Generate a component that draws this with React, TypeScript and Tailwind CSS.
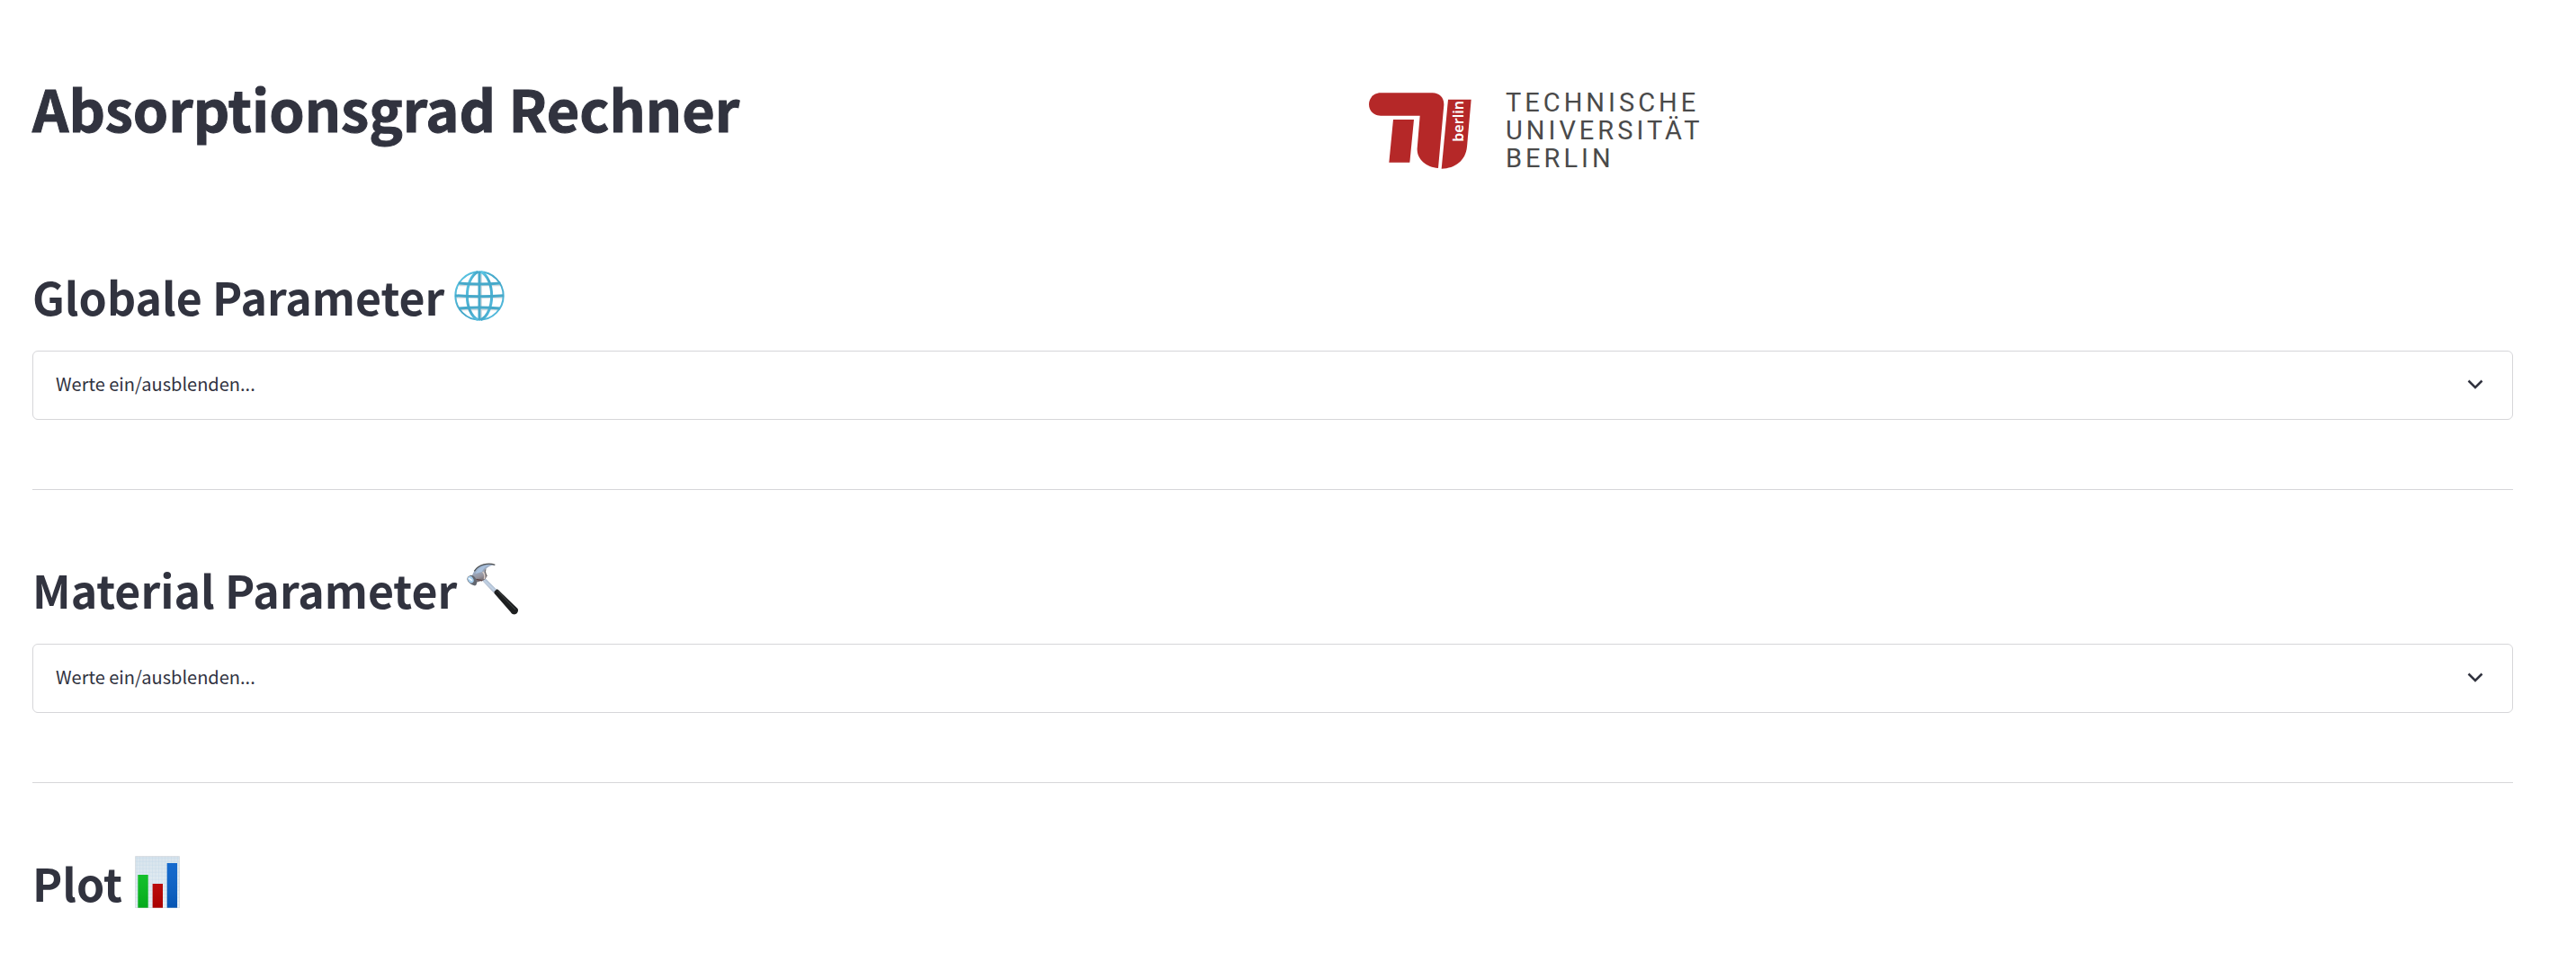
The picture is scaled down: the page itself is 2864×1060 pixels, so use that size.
import { useState, type ReactNode } from "react";

function GlobeIcon() {
  return (
    <svg viewBox="37 30 174 174" className="size-[58px] shrink-0" aria-hidden="true">
      <defs>
        <linearGradient id="globeStroke" x1="0" y1="0" x2="1" y2="1">
          <stop offset="0" stopColor="#5fcbe9" />
          <stop offset="0.5" stopColor="#43a6c8" />
          <stop offset="1" stopColor="#56bfe2" />
        </linearGradient>
      </defs>
      <g fill="none" stroke="#bcc9d0" strokeWidth="5" opacity="0.7">
        <path d="M56 82H194M47 123H203M58 163H190" />
        <path d="M130 40V194" />
      </g>
      <g fill="none" stroke="url(#globeStroke)">
        <circle cx="124" cy="117" r="80" strokeWidth="6" />
        <path d="M119 37C71 60 71 174 119 197" strokeWidth="9" />
        <path d="M129 37C177 60 177 174 129 197" strokeWidth="9" />
      </g>
      <g fill="none" stroke="#46a9ca" strokeWidth="9">
        <path d="M54 75Q124 81 194 75" />
        <path d="M43 116Q124 122 205 116" />
        <path d="M56 159Q124 153 192 159" />
        <path d="M124 36V198" />
      </g>
    </svg>
  );
}

function HammerIcon() {
  return (
    <svg viewBox="42 46 174 174" className="size-[58px] shrink-0" aria-hidden="true">
      <defs>
        <linearGradient id="hammerHead" x1="0" y1="0" x2="0.5" y2="1">
          <stop offset="0" stopColor="#59616b" />
          <stop offset="0.3" stopColor="#a0b6d2" />
          <stop offset="0.7" stopColor="#95929b" />
          <stop offset="1" stopColor="#5c5052" />
        </linearGradient>
        <linearGradient id="hammerNeck" x1="0" y1="1" x2="1" y2="0">
          <stop offset="0" stopColor="#5e4f4d" />
          <stop offset="0.5" stopColor="#c3d3e6" />
          <stop offset="1" stopColor="#4d5d70" />
        </linearGradient>
      </defs>
      <path d="M94 103L106 97L146 137L134 146Z" fill="url(#hammerNeck)" />
      <path d="M137 141L146 134C151 137 154 140 158 144L214 198C220 206 212 220 201 218C196 217 194 214 191 210L136 147Z" fill="#1d1f20" />
      <path d="M149 141L206 201" stroke="#45494a" strokeWidth="3" strokeLinecap="round" />
      <path d="M62 90C66 78 72 68 82 60C98 49 120 46 139 53C126 54 115 59 108 68C104 74 107 82 112 90C109 100 100 107 91 107L76 112C68 107 62 99 62 90Z" fill="url(#hammerHead)" />
      <path d="M73 83C80 65 99 55 122 53C107 58 100 66 96 76Z" fill="#a9c0dc" />
      <path d="M70 74C84 50 118 45 139 53" fill="none" stroke="#4e5153" strokeWidth="4" />
      <path d="M98 76C104 82 106 90 103 100" fill="none" stroke="#ddd0ca" strokeWidth="4" />
      <path d="M108 68C104 76 109 84 112 91" fill="none" stroke="#5e5754" strokeWidth="3" />
      <path d="M76 101C84 103 91 104 96 106" fill="none" stroke="#5a3f40" strokeWidth="4" />
      <path d="M57 88C65 85 76 95 78 109C79 118 76 123 70 122C59 119 47 110 46 101C46 94 50 90 57 88Z" fill="#626770" />
      <ellipse cx="58" cy="102" rx="9" ry="12" transform="rotate(-30 58 102)" fill="#a9cfee" />
      <path d="M53 98L61 104" stroke="#f4fbff" strokeWidth="5" strokeLinecap="round" />
    </svg>
  );
}

function ChartIcon() {
  const lines = Array.from({ length: 14 }, (_, i) => i);
  return (
    <svg viewBox="441 66 174 174" className="size-[58px] shrink-0" aria-hidden="true">
      <defs>
        <linearGradient id="chartPaper" x1="0" y1="0" x2="0" y2="1">
          <stop offset="0" stopColor="#d8e4ec" />
          <stop offset="1" stopColor="#eaf2f8" />
        </linearGradient>
        <linearGradient id="chartShade" x1="0" y1="0" x2="0" y2="1">
          <stop offset="0" stopColor="#fff" stopOpacity="0.06" />
          <stop offset="1" stopColor="#000" stopOpacity="0.12" />
        </linearGradient>
      </defs>
      <rect x="454" y="67" width="148" height="173" fill="url(#chartPaper)" />
      <g stroke="#b6d2e6" strokeWidth="1" opacity="0.7">
        {lines.map((i) => (
          <path key={i} d={`M${459 + i * 10.5} 67V240M454 ${73 + i * 12}H602`} />
        ))}
      </g>
      <rect x="455" y="68" width="146" height="171" fill="none" stroke="#d5d9dc" strokeWidth="2" />
      <rect x="463" y="129" width="34" height="110" fill="#06c01f" />
      <rect x="512" y="159" width="34" height="80" fill="#c00000" />
      <rect x="560" y="90" width="34" height="149" fill="#0660ca" />
      <path d="M463 129h34v110h-34ZM512 159h34v80h-34ZM560 90h34v149h-34Z" fill="url(#chartShade)" />
    </svg>
  );
}

function TuMark() {
  return (
    <svg viewBox="66 68 342 255" className="h-[85px] w-[114px] shrink-0" role="img" aria-label="TU Berlin">
      <g fill="#b52828">
        <path d="M105 69H278C301 69 317 85 316 109L297 320C257 318 225 290 227 254L236 145H105C81 145 66 128 66 107C66 86 82 69 105 69Z" />
        <path d="M147 158H216L202 301H133Z" />
        <path d="M330 91H407L393 249C389 294 353 322 308 322Z" />
      </g>
      <text
        transform="translate(380 232) rotate(-90)"
        fill="#fff"
        fontSize="48"
        fontWeight="600"
        className="font-['Noto_Sans','Open_Sans',sans-serif]"
      >
        berlin
      </text>
    </svg>
  );
}

function UniversityLogo() {
  return (
    <div className="flex items-center gap-[38px]">
      <TuMark />
      <p className="font-['Roboto','Liberation_Sans',sans-serif] text-[29px] leading-[31px] font-normal tracking-[4px] text-[#4a4a4a]">
        TECHNISCHE
        <br />
        UNIVERSITÄT
        <br />
        BERLIN
      </p>
    </div>
  );
}

function Expander({ label }: { label: string }) {
  const [open, setOpen] = useState(false);
  return (
    <div className="rounded-md border border-[#d6d6d9]">
      <button
        type="button"
        aria-expanded={open}
        onClick={() => setOpen(!open)}
        className="flex h-[75px] w-full cursor-pointer items-center justify-between pr-[29px] pb-[3px] pl-[25px] text-left text-[20px] leading-[30px]"
      >
        <span>{label}</span>
        <svg
          viewBox="0 0 24 24"
          className={open ? "size-6 rotate-180" : "size-6"}
          fill="none"
          stroke="currentColor"
          strokeWidth="2.500"
          aria-hidden="true"
        >
          <path d="M4.500 8.500L12 16L19.500 8.500" />
        </svg>
      </button>
      {open && <div className="h-24 border-t border-[#d6d6d9]" />}
    </div>
  );
}

function SectionHeading({ title, icon }: { title: string; icon: ReactNode }) {
  return (
    <h2 className="flex h-[60px] items-center gap-[10px] text-[50px] leading-[60px] font-bold">
      <span>{title}</span>
      {icon}
    </h2>
  );
}

function ParameterSection({ title, icon }: { title: string; icon: ReactNode }) {
  return (
    <section>
      <SectionHeading title={title} icon={icon} />
      <div className="mt-[31px]">
        <Expander label="Werte ein/ausblenden..." />
      </div>
      <hr className="mt-[77px] mb-20 border-[#d6d6d9]" />
    </section>
  );
}

export default function App() {
  return (
    <main className="min-h-screen bg-white pt-[81px] pr-[70px] pb-12 pl-9 font-['Noto_Sans_CJK_SC','Noto_Sans',sans-serif] text-[#31333f]">
      <header className="grid grid-cols-2 gap-6">
        <h1 className="text-[63px] leading-[78px] font-bold [-webkit-text-stroke:1px_#31333f]">
          Absorptionsgrad Rechner
        </h1>
        <div className="pt-[18px] pl-[95px]">
          <UniversityLogo />
        </div>
      </header>
      <div className="mt-[107px]">
        <ParameterSection title="Globale Parameter" icon={<GlobeIcon />} />
        <ParameterSection title="Material Parameter" icon={<HammerIcon />} />
        <section>
          <SectionHeading title="Plot" icon={<ChartIcon />} />
        </section>
      </div>
    </main>
  );
}
